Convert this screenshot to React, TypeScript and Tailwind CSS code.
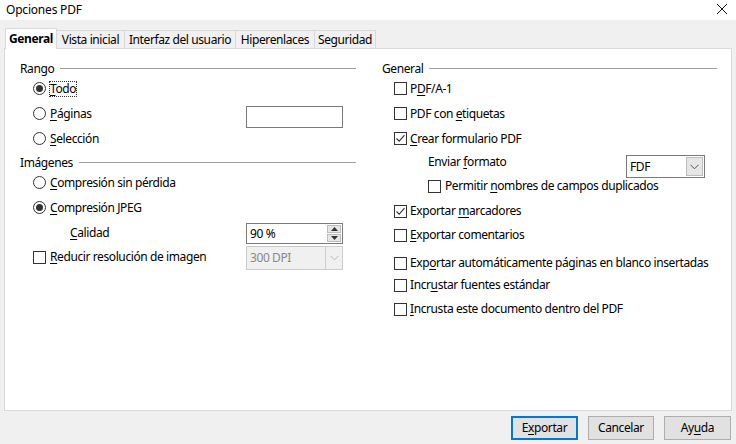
import React from 'react';

const U = ({ children }: { children: React.ReactNode }) => <span className="underline underline-offset-2">{children}</span>;

const Radio = ({ on }: { on?: boolean }) => (
  <span className="w-[13px] h-[13px] rounded-full border border-[#333] bg-white flex items-center justify-center shrink-0">
    {on && <span className="w-[7px] h-[7px] rounded-full bg-[#333]" />}
  </span>
);

const Check = ({ on }: { on?: boolean }) => (
  <span className="w-[13px] h-[13px] border border-[#333] bg-white flex items-center justify-center shrink-0">
    {on && (
      <svg width="11" height="11" viewBox="0 0 11 11">
        <path d="M1.5 5.5 L4.2 8.2 L9.5 2.2" fill="none" stroke="#333" strokeWidth="1.1" />
      </svg>
    )}
  </span>
);

const Heading = ({ text }: { text: string }) => (
  <div className="h-[15px] flex items-center gap-[6px]">
    <span>{text}</span>
    <span className="flex-1 h-px bg-[#a0a0a0]" />
  </div>
);

const Arrow = ({ color = '#555' }: { color?: string }) => (
  <svg width="9" height="6" viewBox="0 0 9 6">
    <path d="M0.5 0.8 L4.5 4.8 L8.5 0.8" fill="none" stroke={color} strokeWidth="1" />
  </svg>
);

const App = () => {
  const tabs = ['Vista inicial', 'Interfaz del usuario', 'Hiperenlaces', 'Seguridad'];
  const tabW = [68, 111, 79, 61];
  return (
    <div className="w-[736px] h-[444px] bg-[#f0f0f0] flex flex-col text-[12px] leading-[16px] tracking-[-0.4px] text-black overflow-hidden whitespace-nowrap" style={{ fontFamily: '"Noto Sans", "Open Sans", sans-serif' }}>
      <div className="h-[20px] bg-white flex items-center justify-between pl-[6px] pr-[8px] shrink-0">
        <span className="text-[12px] tracking-[-0.2px]">Opciones PDF</span>
        <svg width="12" height="12" viewBox="0 0 12 12" className="mb-[3px]">
          <path d="M1 1 L11 11 M11 1 L1 11" stroke="#111" strokeWidth="1" />
        </svg>
      </div>

      {/* tabs */}
      <div className="flex items-end h-[28px] pl-[5px] pt-[7px] shrink-0">
        <div className="h-[21px] w-[52px] bg-white border border-b-0 border-[#d9d9d9] flex items-center justify-center font-bold relative z-10 -mb-px">General</div>
        {tabs.map((t, i) => (
          <div key={t} style={{ width: tabW[i] }} className="h-[18px] bg-[#f0f0f0] border border-b-0 border-l-0 border-[#d9d9d9] flex items-center justify-center">
            {t}
          </div>
        ))}
      </div>

      {/* panel */}
      <div className="mx-[4px] h-[363px] bg-white border border-[#d9d9d9] pt-[12px] pl-[15px] pr-[14px] grid grid-cols-[336px_335px] gap-x-[26px] shrink-0">
        {/* left */}
        <div className="flex flex-col">
          <Heading text="Rango" />
          <div className="h-[25px] flex items-center pl-[13px] gap-[4px]">
            <Radio on />
            <span className="outline-1 outline-dotted outline-[#333] leading-[14px]"><U>T</U>odo</span>
          </div>
          <div className="h-[25px] flex items-center pl-[13px]">
            <div className="w-[213px] flex items-center gap-[4px]">
              <Radio />
              <span><U>P</U>áginas</span>
            </div>
            <div className="w-[97px] h-[22px] border border-[#7a7a7a] bg-white mt-[6px]" />
          </div>
          <div className="h-[25px] flex items-center pl-[13px] gap-[4px]">
            <Radio />
            <span><U>S</U>elección</span>
          </div>
          <div className="mt-[4px]">
            <Heading text="Imágenes" />
          </div>
          <div className="h-[25px] flex items-center pl-[13px] gap-[4px]">
            <Radio />
            <span><U>C</U>ompresión sin pérdida</span>
          </div>
          <div className="h-[25px] flex items-center pl-[13px] gap-[4px]">
            <Radio on />
            <span><U>C</U>ompresión JPEG</span>
          </div>
          <div className="h-[25px] flex items-center">
            <div className="w-[226px] pl-[50px]"><U>C</U>alidad</div>
            <div className="w-[97px] h-[21px] border border-[#7a7a7a] bg-white flex items-center justify-between pl-[3px] pr-px mt-[2px]">
              <span>90 %</span>
              <div className="w-[14px] h-[17px] flex flex-col gap-px">
                <div className="flex-1 bg-[#e6e6e6] border border-[#bdbdbd] flex items-center justify-center">
                  <svg width="7" height="4" viewBox="0 0 7 4"><path d="M0 4 L3.5 0 L7 4Z" fill="#333" /></svg>
                </div>
                <div className="flex-1 bg-[#e6e6e6] border border-[#bdbdbd] flex items-center justify-center">
                  <svg width="7" height="4" viewBox="0 0 7 4"><path d="M0 0 L3.5 4 L7 0Z" fill="#333" /></svg>
                </div>
              </div>
            </div>
          </div>
          <div className="h-[25px] flex items-start pt-[1px]">
            <div className="w-[226px] pl-[13px] flex items-center gap-[4px] mt-[3px]">
              <Check />
              <span><U>R</U>educir resolución de imagen</span>
            </div>
            <div className="w-[97px] h-[24px] border border-[#cccccc] bg-[#f0f0f0] flex items-center justify-between pl-[3px]">
              <span className="text-[#888]">300 DPI</span>
              <div className="w-[17px] h-[22px] border-l border-[#cccccc] flex items-center justify-center">
                <Arrow color="#b5b5b5" />
              </div>
            </div>
          </div>
        </div>

        {/* right */}
        <div className="flex flex-col">
          <Heading text="General" />
          <div className="h-[25px] flex items-center pl-[12px] gap-[3px]">
            <Check />
            <span>P<U>D</U>F/A-1</span>
          </div>
          <div className="h-[25px] flex items-center pl-[12px] gap-[3px]">
            <Check />
            <span>PDF con <U>e</U>tiquetas</span>
          </div>
          <div className="h-[25px] flex items-center pl-[12px] gap-[3px]">
            <Check on />
            <span><U>C</U>rear formulario PDF</span>
          </div>
          <div className="h-[26px] flex items-start">
            <div className="w-[244px] pl-[46px] mt-[3px]">Enviar <U>f</U>ormato</div>
            <div className="w-[79px] h-[23px] border border-[#7a7a7a] bg-white flex items-center justify-between pl-[3px] pr-px mt-[4px]">
              <span>FDF</span>
              <div className="w-[17px] h-[19px] bg-[#e6e6e6] border border-[#bdbdbd] flex items-center justify-center">
                <Arrow />
              </div>
            </div>
          </div>
          <div className="h-[18px] flex items-center pl-[46px] gap-[4px]">
            <Check />
            <span>Permitir <U>n</U>ombres de campos duplicados</span>
          </div>
          <div className="h-[24px] mt-[4px] flex items-center pl-[12px] gap-[3px]">
            <Check on />
            <span>Exportar <U>m</U>arcadores</span>
          </div>
          <div className="h-[24px] flex items-center pl-[12px] gap-[3px]">
            <Check />
            <span><U>E</U>xportar comentarios</span>
          </div>
          <div className="h-[22px] mt-[5px] flex items-center pl-[12px] gap-[3px]">
            <Check />
            <span>Exp<U>o</U>rtar automáticamente páginas en blanco insertadas</span>
          </div>
          <div className="h-[22px] flex items-center pl-[12px] gap-[3px]">
            <Check />
            <span>Incr<U>u</U>star fuentes estándar</span>
          </div>
          <div className="h-[26px] flex items-center pl-[12px] gap-[3px]">
            <Check />
            <span><U>I</U>ncrusta este documento dentro del PDF</span>
          </div>
        </div>
      </div>

      {/* buttons */}
      <div className="flex justify-end gap-[10px] pr-[5px] mt-[5px]">
        <button className="w-[67px] h-[24px] bg-[#e1e1e1] border-2 border-[#0078d7] flex items-center justify-center">E<U>x</U>portar</button>
        <button className="w-[66px] h-[24px] bg-[#e1e1e1] border border-[#adadad] flex items-center justify-center">Cancelar</button>
        <button className="w-[67px] h-[24px] bg-[#e1e1e1] border border-[#adadad] flex items-center justify-center">Ay<U>u</U>da</button>
      </div>
    </div>
  );
};

export default App;
